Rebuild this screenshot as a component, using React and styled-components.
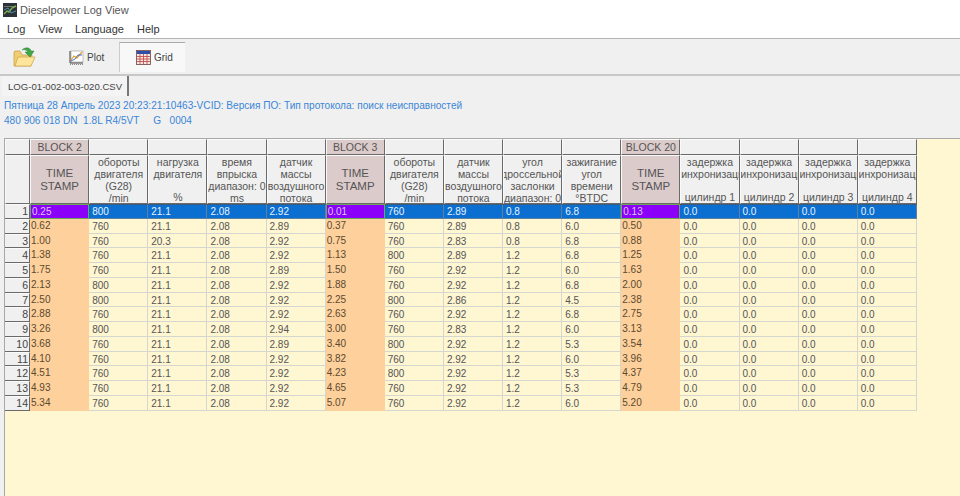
import styled, { createGlobalStyle } from "styled-components"

const GlobalStyle = createGlobalStyle`
    html, body {
        margin: 0;
        padding: 0;
        background: #f0f0f0;
        overflow: hidden;
    }
`

const headers = [
    ["обороты", "двигателя", "(G28)", "/min"],
    ["нагрузка", "двигателя", "", "%"],
    ["время", "впрыска", "диапазон: 0", "ms"],
    ["датчик", "массы", "воздушного", "потока"],
    null,
    ["обороты", "двигателя", "(G28)", "/min"],
    ["датчик", "массы", "воздушного", "потока"],
    ["угол", "дроссельной", "заслонки", "диапазон: 0"],
    ["зажигание", "угол", "времени", "°BTDC"],
    null,
    ["задержка", "синхронизаци", "", "цилиндр 1"],
    ["задержка", "синхронизаци", "", "цилиндр 2"],
    ["задержка", "синхронизаци", "", "цилиндр 3"],
    ["задержка", "синхронизаци", "", "цилиндр 4"],
]

const blocks = { 0: "BLOCK 2", 5: "BLOCK 3", 10: "BLOCK 20" }

const rows = [
    ["0.25", "800", "21.1", "2.08", "2.92", "0.01", "760", "2.89", "0.8", "6.8", "0.13"],
    ["0.62", "760", "21.1", "2.08", "2.89", "0.37", "760", "2.89", "0.8", "6.0", "0.50"],
    ["1.00", "760", "20.3", "2.08", "2.92", "0.75", "760", "2.83", "0.8", "6.8", "0.88"],
    ["1.38", "760", "21.1", "2.08", "2.92", "1.13", "800", "2.89", "1.2", "6.8", "1.25"],
    ["1.75", "760", "21.1", "2.08", "2.89", "1.50", "760", "2.92", "1.2", "6.0", "1.63"],
    ["2.13", "800", "21.1", "2.08", "2.92", "1.88", "760", "2.92", "1.2", "6.8", "2.00"],
    ["2.50", "800", "21.1", "2.08", "2.92", "2.25", "800", "2.86", "1.2", "4.5", "2.38"],
    ["2.88", "760", "21.1", "2.08", "2.92", "2.63", "760", "2.92", "1.2", "6.8", "2.75"],
    ["3.26", "800", "21.1", "2.08", "2.94", "3.00", "760", "2.83", "1.2", "6.0", "3.13"],
    ["3.68", "760", "21.1", "2.08", "2.89", "3.40", "800", "2.92", "1.2", "5.3", "3.54"],
    ["4.10", "760", "21.1", "2.08", "2.92", "3.82", "760", "2.92", "1.2", "6.0", "3.96"],
    ["4.51", "760", "21.1", "2.08", "2.92", "4.23", "800", "2.92", "1.2", "5.3", "4.37"],
    ["4.93", "760", "21.1", "2.08", "2.92", "4.65", "760", "2.92", "1.2", "5.3", "4.79"],
    ["5.34", "760", "21.1", "2.08", "2.92", "5.07", "760", "2.92", "1.2", "6.0", "5.20"],
]

const Page = styled.div`
    width: 960px;
    height: 496px;
    overflow: hidden;
    display: flex;
    flex-direction: column;
    background: #f0f0f0;
    font-family: "Liberation Sans", Arial, sans-serif;
    color: #333;
`

const TitleBar = styled.div`
    height: 19px;
    background: #fff;
    display: flex;
    align-items: center;
    gap: 3px;
    padding-left: 3px;
    font-size: 11px;
    color: #555;
`

const MenuBar = styled.div`
    height: 19px;
    background: #fff;
    display: flex;
    align-items: center;
    gap: 13px;
    padding-left: 7px;
    font-size: 11px;
    color: #333;
    border-bottom: 1px solid #b4b4b4;
`

const ToolBar = styled.div`
    height: 30px;
    display: flex;
    align-items: stretch;
    padding: 3px 0 2px 2px;
    border-bottom: 2px solid #c8c8c8;
`

const ToolButton = styled.div`
    width: ${p => p.$width}px;
    padding-left: ${p => p.$pad}px;
    display: flex;
    align-items: center;
    gap: 3px;
    font-size: 10px;
    color: #444;
    box-sizing: border-box;
    ${p => p.$active && `
        background: #f8f8f8;
        border-top: 1px solid #aaa;
        border-left: 1px solid #ccc;
    `}
`

const TabRow = styled.div`
    height: 20px;
    padding-left: 2px;
    display: flex;
`

const Tab = styled.div`
    display: flex;
    align-items: center;
    padding: 0 5px 0 6px;
    font-size: 9.6px;
    color: #444;
    background: #f4f4f4;
    border-right: 2px solid #777;
`

const Info = styled.div`
    height: 42px;
    padding: 2px 0 0 4px;
    font-size: 10.1px;
    line-height: 15px;
    color: #3a86d8;
    box-sizing: border-box;
    white-space: pre;
`

const GridArea = styled.div`
    flex: 1;
    margin-left: 4px;
    background: #fff6d2;
    border-top: 1px solid #a8a8a8;
    border-left: 1px solid #a8a8a8;
`

const Table = styled.div`
    display: grid;
    grid-template-columns: 25px repeat(15, 59.13px);
    grid-template-rows: 16px 49px repeat(14, 14.78px);
    width: 912px;
    font-size: 10px;
`

const HeadCell = styled.div`
    box-sizing: border-box;
    background: ${p => (p.$block ? "#dccbcb" : "#f0f0f0")};
    border-top: 1px solid #fafafa;
    border-left: 1px solid #fafafa;
    border-right: 1px solid #6a6a6a;
    border-bottom: 1px solid #6a6a6a;
    text-align: center;
    line-height: 12px;
    font-size: 10.5px;
    color: #555;
    white-space: nowrap;
    overflow: hidden;
    display: flex;
    flex-direction: column;
    justify-content: ${p => (p.$center ? "center" : "flex-start")};
    align-items: center;
`

const HeadLine = styled.div`
    height: 12px;
`

const StampLine = styled.div`
    font-size: 11.5px;
    line-height: 12.5px;
`

const RowHead = styled.div`
    box-sizing: border-box;
    background: #f0f0f0;
    border-top: 1px solid #fafafa;
    border-right: 1px solid #6a6a6a;
    border-bottom: 1px solid #6a6a6a;
    text-align: right;
    padding-right: 1px;
    line-height: 13px;
    font-size: 10.5px;
    color: #444;
`

const Cell = styled.div`
    box-sizing: border-box;
    padding: 1px 0 0 3px;
    line-height: 13px;
    overflow: hidden;
    white-space: nowrap;
    border-right: 1px solid #d6d6d0;
    border-bottom: 1px solid #d6d6d0;
    color: #555;
    background: #fff6d2;
    ${p => p.$stamp && `
        background: #fed09c;
        border-color: #fed09c;
        padding: 0 0 0 1px;
        color: #5b4a2e;
    `}
    ${p => p.$selected && `
        background: #0a6fd0;
        color: #e8f2ff;
        border-right-color: #5e7fa0;
        border-bottom-color: #5e7fa0;
        border-top: 1px dotted #6a4a2a;
        padding-top: 0;
    `}
    ${p => p.$selected && p.$stamp && `
        background: #8a00f8;
        color: #d8c8ff;
        border: 1px solid #6ca85a;
        padding: 0 0 0 1px;
    `}
`

const AppIcon = () => (
    <svg width="14" height="14" viewBox="0 0 14 14">
        <rect width="14" height="14" fill="#2b3338" />
        <rect x="1" y="3" width="12" height="1" fill="#6a7a70" />
        <path d="M1 11 L4 8 L6 9 L9 5 L13 3" stroke="#7fae4a" strokeWidth="1.4" fill="none" />
        <path d="M1 7 L5 5 L8 10 L13 8" stroke="#4f8fa8" strokeWidth="1" fill="none" />
    </svg>
)

const FolderIcon = () => (
    <svg width="24" height="22" viewBox="0 0 24 22">
        <path d="M1 6 L1 20 L18 20 L19 9 L9 9 L7 5 L2 5 Z" fill="#f1cd72" stroke="#c9a24a" strokeWidth="0.8" />
        <path d="M2 20 L5 11 L22 11 L18 20 Z" fill="#fde69c" stroke="#d0aa52" strokeWidth="0.8" />
        <path d="M9 4 C12 1 17 1 18 5 L21 5 L17 11 L12 6 L15 6 C14 4 11 3 9 4 Z" fill="#3fa845" stroke="#2c7f33" strokeWidth="0.5" />
    </svg>
)

const PlotIcon = () => (
    <svg width="15" height="15" viewBox="0 0 15 15">
        <rect x="2" y="1" width="12" height="11" fill="#fff" stroke="#999" strokeWidth="0.6" />
        <path d="M1 1 V13 H14" stroke="#444" fill="none" />
        <path d="M2 10 L5 6 L8 8 L13 2" stroke="#e0a020" strokeWidth="1.2" fill="none" />
        <path d="M2 11 L6 9 L9 5 L13 5" stroke="#4a6fd0" strokeWidth="1" fill="none" />
        <path d="M1 14.500 H14" stroke="#888" strokeDasharray="1 1" />
    </svg>
)

const GridIcon = () => (
    <svg width="15" height="15" viewBox="0 0 15 15">
        <rect x="0.500" y="0.500" width="14" height="14" fill="#f5e8e0" stroke="#6a4040" strokeWidth="0.8" />
        <rect x="1" y="1" width="13" height="3" fill="#2f4fa8" />
        <path d="M1 6.500 H14 M1 9 H14 M1 11.500 H14 M4 4 V14 M7.500 4 V14 M11 4 V14" stroke="#c04040" strokeWidth="0.8" />
    </svg>
)

const renderHeader = (lines, i) => {
    if (!lines) {
        return (
            <HeadCell key={i} $block $center>
                <StampLine>TIME</StampLine>
                <StampLine>STAMP</StampLine>
            </HeadCell>
        )
    }
    return (
        <HeadCell key={i}>
            {lines.map((line, n) => <HeadLine key={n}>{line}</HeadLine>)}
        </HeadCell>
    )
}

export default function App() {
    return (
        <Page>
            <GlobalStyle />
            <TitleBar>
                <AppIcon />
                Dieselpower Log View
            </TitleBar>
            <MenuBar>
                <span>Log</span>
                <span>View</span>
                <span>Language</span>
                <span>Help</span>
            </MenuBar>
            <ToolBar>
                <ToolButton $width={42} $pad={11}><FolderIcon /></ToolButton>
                <ToolButton $width={75} $pad={25}><PlotIcon />Plot</ToolButton>
                <ToolButton $width={66} $pad={16} $active><GridIcon />Grid</ToolButton>
            </ToolBar>
            <TabRow>
                <Tab>LOG-01-002-003-020.CSV</Tab>
            </TabRow>
            <Info>
                <div>Пятница 28 Апрель 2023 20:23:21:10463-VCID: Версия ПО: Тип протокола: поиск неисправностей</div>
                <div>480 906 018 DN  1.8L R4/5VT     G   0004</div>
            </Info>
            <GridArea>
                <Table>
                    <HeadCell />
                    {headers.concat([null]).slice(0, 15).map((_, i) => (
                        <HeadCell key={i} $block={blocks[i] !== undefined} $center>
                            {blocks[i]}
                        </HeadCell>
                    ))}
                    <HeadCell />
                    {renderHeader(null, "s0")}
                    {headers.map(renderHeader)}
                    {rows.map((row, r) => {
                        const cells = [...row, "0.0", "0.0", "0.0", "0.0"]
                        return [
                            <RowHead key={`h${r}`}>{r + 1}</RowHead>,
                            ...cells.map((v, c) => (
                                <Cell
                                    key={`${r}-${c}`}
                                    $stamp={c === 0 || c === 5 || c === 10}
                                    $selected={r === 0}
                                >
                                    {v}
                                </Cell>
                            )),
                        ]
                    })}
                </Table>
            </GridArea>
        </Page>
    )
}
